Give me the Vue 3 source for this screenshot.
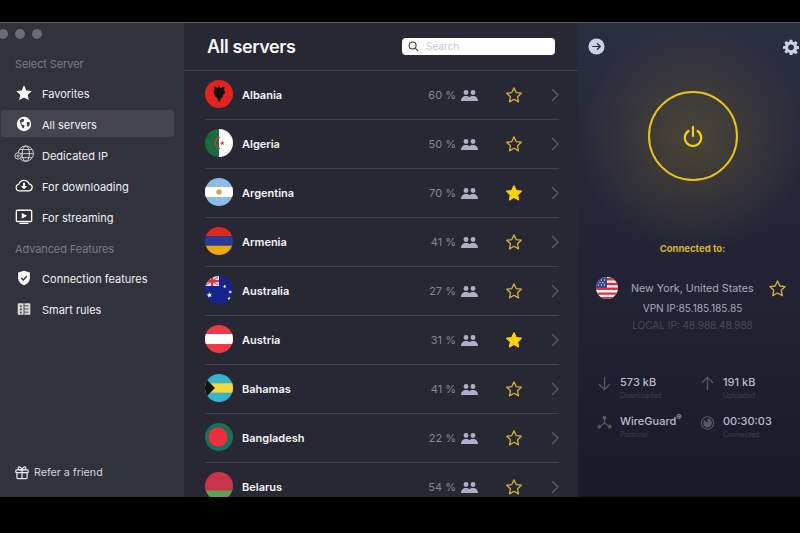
<template>
  <div class="page">
    <div class="window">
      <aside class="sidebar">
        <div class="lights"><i></i><i></i><i></i></div>
        <div class="section-title first">Select Server</div>
        <div v-for="item in mainMenu" :key="item.label" class="menu-item" :class="{active: item.active}">
          <svg class="menu-icon" viewBox="0 0 20 20" v-html="item.icon"></svg>
          <span>{{ item.label }}</span>
        </div>
        <div class="section-title">Advanced Features</div>
        <div v-for="item in advancedMenu" :key="item.label" class="menu-item">
          <svg class="menu-icon" viewBox="0 0 20 20" v-html="item.icon"></svg>
          <span>{{ item.label }}</span>
        </div>
        <div class="refer">
          <svg class="gift" viewBox="0 0 16 16" fill="none" stroke="#e8e8ee" stroke-width="1.400">
            <rect x="1" y="5" width="14" height="3.2" rx=".8"/>
            <path d="M2.2 8.2V14a1 1 0 0 0 1 1h9.6a1 1 0 0 0 1-1V8.2M8 5v10"/>
            <path d="M8 5C6.5 1 3.6.6 3.6 3c0 1.4 2 2 4.4 2 2.4 0 4.4-.6 4.4-2C12.400.6 9.500 1 8 5z"/>
          </svg>
          <span>Refer a friend</span>
        </div>
      </aside>

      <main class="list">
        <header class="list-head">
          <h1>All servers</h1>
          <div class="search">
            <svg viewBox="0 0 12 12" fill="none" stroke="#333" stroke-width="1.1"><circle cx="5" cy="5" r="3.800"/><path d="M8 8l3.200 3.200"/></svg>
            <span>Search</span>
          </div>
        </header>
        <div class="rows">
          <div v-for="s in servers" :key="s.name" class="row">
            <svg class="flag" viewBox="0 0 28 28" v-html="flags[s.name]"></svg>
            <span class="name">{{ s.name }}</span>
            <span class="pct">{{ s.load }} %</span>
            <svg class="people" viewBox="0 0 17 11" fill="#aeb0c8">
              <circle cx="5" cy="2.500" r="2.400"/><circle cx="12" cy="2.500" r="2.400"/>
              <path d="M0 11c0-3 2-5 5-5 1.500 0 2.700.5 3.500 1.200C9.300 6.500 10.500 6 12 6c3 0 5 2 5 5z"/>
            </svg>
            <svg class="star" viewBox="0 0 24 24" :fill="s.fav ? '#fdd20e' : 'none'" :stroke="s.fav ? '#fdd20e' : '#d4b136'" stroke-width="1.700" stroke-linejoin="round">
              <path d="M12 2.500l2.900 6.300 6.800.8-5 4.700 1.300 6.800-6-3.400-6 3.400 1.300-6.800-5-4.700 6.800-.8z"/>
            </svg>
            <svg class="chev" viewBox="0 0 8 14" fill="none" stroke="#55566a" stroke-width="1.500"><path d="M1 1l6 6-6 6"/></svg>
          </div>
        </div>
      </main>

      <section class="panel">
        <div class="panel-top">
          <svg class="go" viewBox="0 0 18 18">
            <circle cx="9" cy="9" r="8.500" fill="#cfd0e6"/>
            <path d="M4.500 9h8.500M9.500 5.500L13 9l-3.500 3.500" fill="none" stroke="#2a2b3c" stroke-width="1.300"/>
          </svg>
          <svg class="gear" viewBox="0 0 24 24" fill="#cfd0e6">
            <path fill-rule="evenodd" d="M10 1h4l.6 3.200 1.900.8 2.700-1.900 2.800 2.800-1.900 2.700.8 1.900L24 11v4l-3.100.5-.8 1.900 1.900 2.700-2.800 2.800-2.700-1.900-1.900.8L14 24h-4l-.6-3.200-1.900-.8-2.700 1.900-2.800-2.800 1.900-2.700-.8-1.900L0 15v-4l3.100-.5.800-1.900L2 5.900l2.800-2.800 2.700 1.900 1.900-.8zM12 8.200a4.300 4.300 0 1 0 0 8.600 4.300 4.300 0 0 0 0-8.600z"/>
          </svg>
        </div>
        <div class="ring">
          <svg viewBox="0 0 22 24" fill="none" stroke="#f5cf14" stroke-width="2.400" stroke-linecap="round">
            <path d="M6 6.500a9 9 0 1 0 10 0M11 2v10"/>
          </svg>
        </div>
        <div class="connected">Connected to:</div>
        <div class="location">
          <svg class="us" viewBox="0 0 22 22">
            <rect width="22" height="22" fill="#f4f4f6"/>
            <path d="M0 1h22v2.400H0zM0 5.800h22v2.400H0zM0 10.600h22V13H0zM0 15.400h22v2.400H0zM0 20h22v2H0z" fill="#d8343f"/>
            <rect width="11" height="11" fill="#3d4a8a"/>
            <path d="M2 3h1M5 3h1M8 3h1M3.500 5.500h1M6.500 5.500h1M2 8h1M5 8h1M8 8h1" stroke="#fff" stroke-width="1"/>
          </svg>
          <span>New York, United States</span>
          <svg class="loc-star" viewBox="0 0 24 24" fill="none" stroke="#d4b136" stroke-width="1.700" stroke-linejoin="round">
            <path d="M12 2.500l2.900 6.300 6.800.8-5 4.700 1.300 6.800-6-3.400-6 3.400 1.300-6.800-5-4.700 6.800-.8z"/>
          </svg>
        </div>
        <div class="vpn-ip">VPN IP:85.185.185.85</div>
        <div class="local-ip">LOCAL IP: 48.988.48.988</div>
        <div class="stats">
          <div class="stat">
            <svg viewBox="0 0 16 16" fill="none" stroke="#565868" stroke-width="1.400"><path d="M8 1v13.500M2 8.500l6 6 6-6"/></svg>
            <div><b>573 kB</b><small>Downloaded</small></div>
          </div>
          <div class="stat">
            <svg viewBox="0 0 16 16" fill="none" stroke="#565868" stroke-width="1.400"><path d="M8 15V1.500M2 7.500l6-6 6 6"/></svg>
            <div><b>191 kB</b><small>Uploaded</small></div>
          </div>
          <div class="stat">
            <svg viewBox="0 0 16 16" fill="#565868" stroke="#565868"><path d="M8 3.500v5L3 12M8 8.500l5 3.500" fill="none" stroke-width="1.200"/><circle cx="8" cy="3" r="1.700"/><circle cx="2.500" cy="12.500" r="1.700"/><circle cx="13.500" cy="12.500" r="1.700"/></svg>
            <div><b>WireGuard<sup>®</sup></b><small>Protocol</small></div>
          </div>
          <div class="stat">
            <svg viewBox="0 0 16 16"><circle cx="8" cy="8.500" r="6.600" fill="none" stroke="#565868" stroke-width="1.200"/><path d="M8 8.500V3.800A4.700 4.700 0 1 1 4.700 5.200z" fill="#565868"/></svg>
            <div><b>00:30:03</b><small>Connected</small></div>
          </div>
        </div>
      </section>
    </div>
  </div>
</template>

<script setup>
const mainMenu = [
  {label: 'Favorites', icon: '<path fill="#fff" d="M10 1.500l2.600 5.600 6.100.7-4.500 4.200 1.200 6-5.400-3-5.400 3 1.200-6L1.300 7.800l6.100-.7z"/>'},
  {label: 'All servers', active: true, icon: '<circle cx="10" cy="10" r="8" fill="#fff"/><path fill="#3f404c" d="M5 6.500l3-2.500 2.500 1-1 2.500-2.500.5.500 2.500 3 1-.5 3.500-2-1-1.500-3.500zM13 8l3-.5.500 3-2 3-1.500-2.500z"/>'},
  {label: 'Dedicated IP', icon: '<g fill="none" stroke="#eee" stroke-width=".9"><circle cx="12" cy="8.500" r="8.500"/><ellipse cx="12" cy="8.500" rx="4" ry="8.500"/><path d="M3.500 8.500h17M5 4h14M5 13h14"/><circle cx="3.500" cy="11" r="3.600" fill="#31323b"/><circle cx="3.500" cy="11" r="1.300"/></g>'},
  {label: 'For downloading', icon: '<path fill="none" stroke="#fff" stroke-width="1.300" d="M5 15.500a3.800 3.800 0 0 1-.8-7.500 6 6 0 0 1 11.400-.4 4 4 0 0 1 .2 7.900z"/><path fill="#fff" d="M9 6.500h2V10h2.500L10 13.500 6.500 10H9z"/>'},
  {label: 'For streaming', icon: '<rect x="1.500" y="2.500" width="17" height="12.500" rx="1" fill="none" stroke="#fff" stroke-width="1.500"/><path fill="#fff" d="M7.500 5.500l6 3.200-6 3.200zM5 16.500h10v1.300H5z"/>'}
]

const advancedMenu = [
  {label: 'Connection features', icon: '<path fill="#fff" d="M10 2l6.500 2v6c0 4-3 6.800-6.500 8-3.500-1.200-6.500-4-6.500-8V4z"/><path fill="none" stroke="#31323b" stroke-width="1.500" d="M7 10l2.200 2.200L13.200 8"/>'},
  {label: 'Smart rules', icon: '<rect x="3" y="3.500" width="14" height="13" rx="1" fill="#d9d9de"/><path fill="none" stroke="#31323b" stroke-width="1" d="M10.500 6.500H15M10.500 10H15M10.500 13.500H15M10 3.500v13"/><circle cx="6.500" cy="7" r="1.200" fill="#555"/><circle cx="6.500" cy="10.500" r="1.200" fill="#555"/><circle cx="6.500" cy="14" r="1.200" fill="#555"/>'}
]

const servers = [
  {name: 'Albania', load: 60},
  {name: 'Algeria', load: 50},
  {name: 'Argentina', load: 70, fav: true},
  {name: 'Armenia', load: 41},
  {name: 'Australia', load: 27},
  {name: 'Austria', load: 31, fav: true},
  {name: 'Bahamas', load: 41},
  {name: 'Bangladesh', load: 22},
  {name: 'Belarus', load: 54}
]

const flags = {
  Albania: '<rect width="28" height="28" fill="#e3231f"/><path fill="#111" d="M14 6l1.200 2 3.300-1.500 1 .5-.5 4 1-.5-.5 3.500-1.500 1 .5 1.500-2 1-.7 2L14 22l-1.300-2.500-.7-2-2-1 .5-1.500-1.500-1-.5-3.500 1 .5-.5-4 1-.5L12.800 8z"/>',
  Algeria: '<rect width="14" height="28" fill="#1c6b3e"/><rect x="14" width="14" height="28" fill="#fff"/><path d="M15 8.300A5.800 5.800 0 0 0 15 19.700" fill="none" stroke="#d63a3f" stroke-width="1.300"/><path fill="#d63a3f" d="M17 11.500l.6 1.700 1.700-.2-1.100 1.200.9 1.500-1.700-.5-1.200 1.300.1-1.800-1.600-.7 1.700-.6z"/>',
  Argentina: '<rect width="28" height="28" fill="#8cbce4"/><rect y="9" width="28" height="10" fill="#fff"/><circle cx="14" cy="14" r="2.800" fill="#e9a04a"/>',
  Armenia: '<rect width="28" height="9.300" fill="#dc2b1d"/><rect y="9.300" width="28" height="9.400" fill="#293a9b"/><rect y="18.700" width="28" height="9.300" fill="#eea70c"/>',
  Australia: '<rect width="28" height="28" fill="#15258f"/><rect x="0" y="0" width="14" height="10" fill="#e9e4ea"/><path d="M0 4h14v2.200H0zM6 0h2.200v10H6z" fill="#d9343f"/><path d="M1 1l12 8M13 1L1 9" stroke="#d9343f" stroke-width="1"/><path fill="#fff" d="M4 16l1 2 2-.3-1.300 1.500 1 1.900-2-.8-1.500 1.500.2-2.100-1.900-1 2.100-.5zM19.500 8.500l.6 1.300 1.300-.2-.9.9.6 1.300-1.300-.6-1 1 .1-1.400-1.200-.6 1.400-.3zM25 14l.6 1.300 1.300-.2-.9.9.6 1.300-1.300-.6-1 1 .1-1.400-1.200-.6 1.400-.3zM24 20.500l.6 1.300 1.300-.2-.9.9.6 1.300-1.300-.6-1 1 .1-1.400-1.200-.6 1.400-.3z"/>',
  Austria: '<rect width="28" height="28" fill="#ee3a47"/><rect y="9" width="28" height="10" fill="#fff"/>',
  Bahamas: '<rect width="28" height="28" fill="#38b2cf"/><rect y="9.300" width="28" height="9.400" fill="#f4d838"/><path fill="#111" d="M0 4l10 10L0 24z"/>',
  Bangladesh: '<rect width="28" height="28" fill="#197058"/><circle cx="13" cy="14" r="9.500" fill="#ee2e40"/>',
  Belarus: '<rect width="28" height="28" fill="#c9344a"/><rect y="18.500" width="28" height="9.500" fill="#5ba257"/>'
}
</script>

<style>
body {
  background: #000;
}
</style>

<style scoped>
.page {
  height: 533px;
  box-sizing: border-box;
  padding: 22px 0 36px;
  background: #000;
  font-family: Inter, "Liberation Sans", sans-serif;
  overflow: hidden;
}

.window {
  display: flex;
  height: 475px;
  border-top: 1px solid #5b5b5f;
  box-sizing: border-box;
  overflow: hidden;
}

.sidebar {
  position: relative;
  width: 184px;
  flex: none;
  background: #31323b;
  box-sizing: border-box;
  padding-top: 6px;
  display: flex;
  flex-direction: column;
}

.lights {
  display: flex;
  gap: 7px;
  margin-left: -2px;
}

.lights i {
  width: 10px;
  height: 10px;
  border-radius: 50%;
  background: #6b6c72;
}

.section-title {
  font-size: 11px;
  letter-spacing: -.1px;
  line-height: 14px;
  color: #7b7c87;
  padding-left: 15px;
  margin: 8px 0 8.500px;
}

.section-title.first {
  margin-top: 18px;
  margin-bottom: 8px;
}

.menu-item {
  display: flex;
  align-items: center;
  height: 27px;
  margin: 0 10px 4px 1px;
  padding-left: 14px;
  border-radius: 3px;
  font-size: 11px;
  color: #f0f0f4;
}

.menu-item span {
  margin-top: 2px;
}

.menu-item.active {
  background: #43444f;
}

.menu-icon {
  width: 18px;
  height: 18px;
  margin-right: 9px;
  flex: none;
  overflow: visible;
}

.refer {
  margin-top: auto;
  margin-bottom: 17px;
  padding-left: 15px;
  display: flex;
  align-items: center;
  gap: 5px;
  font-size: 10.700px;
  color: #d4d4dc;
}

.gift {
  width: 14px;
  height: 15px;
  overflow: visible;
}

.list {
  width: 394px;
  flex: none;
  background: #272834;
  overflow: hidden;
}

.list-head {
  height: 48px;
  box-sizing: border-box;
  border-bottom: 1px solid #3f404c;
  padding: 0 23px;
  display: flex;
  align-items: center;
  justify-content: space-between;
}

.list-head h1 {
  margin: 0;
  font-size: 18px;
  font-weight: 600;
  color: #f6f6f8;
  letter-spacing: -.4px;
}

.search {
  width: 153px;
  height: 17px;
  background: #fff;
  border-radius: 4px;
  display: flex;
  align-items: center;
  padding-left: 6px;
  box-sizing: border-box;
  gap: 7px;
  font-size: 10px;
  color: #c8c8cc;
  margin-top: -1px;
}

.search svg {
  width: 11px;
  height: 11px;
}

.rows {
  padding-left: 21px;
  width: 375px;
  box-sizing: border-box;
}

.row {
  display: flex;
  align-items: center;
  height: 49px;
  box-sizing: border-box;
  border-bottom: 1px solid #42434f;
}

.flag {
  width: 28px;
  height: 28px;
  border-radius: 50%;
  margin-right: 9px;
  margin-top: -2px;
  flex: none;
}

.name {
  flex: 1;
  font-size: 11px;
  font-weight: 600;
  color: #f4f4f6;
}

.pct {
  font-size: 11px;
  color: #85869a;
}

.people {
  width: 17px;
  height: 11px;
  margin-left: 5px;
}

.star {
  width: 18px;
  height: 18px;
  margin-left: 27px;
}

.chev {
  width: 8px;
  height: 14px;
  margin-left: 28px;
}

.panel {
  flex: 1;
  min-width: 0;
  background:
    radial-gradient(circle at 115px 115px, rgba(105, 92, 50, .55) 0, rgba(105, 92, 50, .28) 55px, rgba(105, 92, 50, 0) 115px),
    linear-gradient(#2b2d42, #1a1b28);
  display: flex;
  flex-direction: column;
  align-items: center;
}

.panel-top {
  align-self: stretch;
  display: flex;
  justify-content: space-between;
  align-items: center;
  padding: 15px 0 0 10px;
}

.go {
  width: 17px;
  height: 17px;
}

.gear {
  width: 16px;
  height: 16px;
  margin-right: 1px;
}

.ring {
  width: 90px;
  height: 90px;
  box-sizing: border-box;
  border: 2px solid #e8c417;
  border-radius: 50%;
  margin-top: 36px;
  margin-left: 7px;
  display: flex;
  align-items: center;
  justify-content: center;
}

.ring svg {
  width: 20px;
  height: 22px;
}

.connected {
  font-size: 9.500px;
  font-weight: 700;
  color: #d8b424;
  line-height: 12px;
  margin-top: 62px;
  margin-left: 7px;
}

.location {
  align-self: stretch;
  display: flex;
  align-items: center;
  padding-left: 18px;
  margin-top: 22px;
  font-size: 10.700px;
  color: #a9aabd;
}

.us {
  width: 22px;
  height: 22px;
  border-radius: 50%;
  margin-right: 13px;
}

.loc-star {
  width: 19px;
  height: 19px;
  margin-left: 14px;
}

.vpn-ip {
  font-size: 10.100px;
  color: #a9aabd;
  margin-top: 2px;
  margin-left: 7px;
  line-height: 14px;
}

.local-ip {
  font-size: 10px;
  color: #474959;
  margin-top: 3px;
  margin-left: 7px;
  line-height: 14px;
}

.stats {
  align-self: stretch;
  display: grid;
  grid-template-columns: 103px 1fr;
  row-gap: 14px;
  padding-left: 19px;
  margin-top: 44px;
}

.stat {
  display: flex;
  gap: 8px;
  align-items: flex-start;
}

.stat svg {
  width: 15px;
  height: 15px;
  flex: none;
}

.stat b {
  display: block;
  font-size: 11px;
  font-weight: 500;
  line-height: 13px;
  color: #b9bacb;
}

.stat sup {
  font-size: 8px;
  line-height: 0;
}

.stat small {
  display: block;
  font-size: 7px;
  line-height: 10px;
  margin-top: 2px;
  color: #3e404f;
}
</style>
